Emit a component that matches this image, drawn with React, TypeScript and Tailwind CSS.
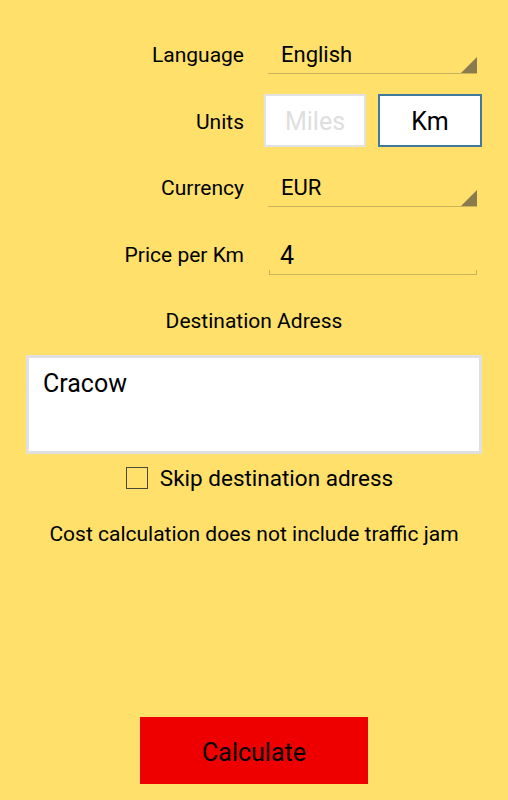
import React, { useState } from 'react';

const font = { fontFamily: 'Roboto, "Liberation Sans", sans-serif' };

function Spinner({ value }: { value: string }) {
  return (
    <div className="relative w-[209px] h-[38px] flex items-center border-b border-[#c9b35a]">
      <span className="pl-[13px] text-[22px] text-black">{value}</span>
      <div className="absolute right-0 bottom-0 w-0 h-0 border-l-[16px] border-l-transparent border-b-[16px] border-b-[#8a7b4e]" />
    </div>
  );
}

export default function App() {
  const [units, setUnits] = useState<'miles' | 'km'>('km');
  const [skip, setSkip] = useState(false);

  return (
    <div className="w-[508px] h-[800px] bg-[#fee06a] flex flex-col text-black overflow-hidden" style={font}>
      {/* Language */}
      <div className="flex items-center mt-[36px]">
        <div className="w-[244px] text-right text-[21px] pt-[2px]">Language</div>
        <div className="ml-[24px]"><Spinner value="English" /></div>
      </div>

      {/* Units */}
      <div className="flex items-center mt-[20px]">
        <div className="w-[244px] text-right text-[21px] pt-[4px]">Units</div>
        <div className="ml-[20px] flex gap-[12px]">
          <button
            onClick={() => setUnits('miles')}
            className={`w-[102px] h-[53px] bg-white border-2 text-[25px] pt-[3px] ${units === 'miles' ? 'border-[#3f7a9e] text-black' : 'border-[#e2e2e2] text-[#dedede]'}`}
          >
            Miles
          </button>
          <button
            onClick={() => setUnits('km')}
            className={`w-[104px] h-[53px] bg-white border-2 text-[25px] pt-[3px] ${units === 'km' ? 'border-[#3f7a9e] text-black' : 'border-[#e2e2e2] text-[#dedede]'}`}
          >
            Km
          </button>
        </div>
      </div>

      {/* Currency */}
      <div className="flex items-center mt-[22px]">
        <div className="w-[244px] text-right text-[21px] pt-[2px]">Currency</div>
        <div className="ml-[24px]"><Spinner value="EUR" /></div>
      </div>

      {/* Price per Km */}
      <div className="flex items-center mt-[28px]">
        <div className="w-[244px] text-right text-[21px] pt-[2px]">Price per Km</div>
        <div className="ml-[25px] relative w-[208px] h-[40px] flex items-center border-b border-[#c9b35a]">
          <span className="pl-[11px] text-[25px] pt-[2px]">4</span>
          <div className="absolute left-0 bottom-0 w-px h-[4px] bg-[#c9b35a]" />
          <div className="absolute right-0 bottom-0 w-px h-[4px] bg-[#c9b35a]" />
        </div>
      </div>

      {/* Destination */}
      <div className="mt-[34px] text-center text-[21px] leading-[24px]">Destination Adress</div>
      <div className="mt-[22px] mx-[26px] h-[99px] bg-white border-[3px] border-[#e0e0e0] px-[14px] pt-[7px] text-[25px]">
        Cracow
      </div>

      <label className="mt-[11px] pl-[11px] flex items-center justify-center gap-[12px] cursor-pointer">
        <span
          onClick={() => setSkip(!skip)}
          className="w-[22px] h-[22px] border border-[#4a4a3a] flex items-center justify-center text-[16px]"
        >
          {skip ? '✓' : ''}
        </span>
        <span className="text-[22.5px] leading-[26px]">Skip destination adress</span>
      </label>

      <div className="mt-[31px] text-center text-[21px] leading-[24px]">Cost calculation does not include traffic jam</div>

      <div className="flex-1" />

      <div className="flex justify-center mb-[16px]">
        <button className="w-[228px] h-[67px] bg-[#ee0000] text-[25px] text-black pt-[4px]">Calculate</button>
      </div>
    </div>
  );
}
